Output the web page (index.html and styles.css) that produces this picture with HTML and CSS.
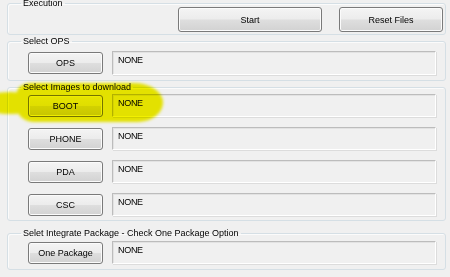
FILE: index.html
```html
<!DOCTYPE html>
<html>
<head>
<meta charset="utf-8">
<link rel="stylesheet" href="styles.css">
</head>
<body>
<div class="dialog">
  <fieldset class="group exec">
    <legend>Execution</legend>
    <div class="exec-row">
      <button class="btn start">Start</button>
      <button class="btn reset">Reset Files</button>
    </div>
  </fieldset>
  <fieldset class="group ops">
    <legend>Select OPS</legend>
    <div class="row"><button class="btn pick">OPS</button><div class="field">NONE</div></div>
  </fieldset>
  <fieldset class="group images">
    <legend>Select Images to download</legend>
    <div class="rows">
      <div class="row"><button class="btn pick">BOOT</button><div class="field">NONE</div></div>
      <div class="row"><button class="btn pick">PHONE</button><div class="field">NONE</div></div>
      <div class="row"><button class="btn pick">PDA</button><div class="field">NONE</div></div>
      <div class="row"><button class="btn pick">CSC</button><div class="field">NONE</div></div>
    </div>
  </fieldset>
  <fieldset class="group integrate">
    <legend>Selet Integrate Package - Check One Package Option</legend>
    <div class="row"><button class="btn pick">One Package</button><div class="field">NONE</div></div>
  </fieldset>
</div>
<div class="marker"><span class="blob main"></span><span class="blob tail"></span></div>
</body>
</html>
```

FILE: styles.css
```css
html, body {
  margin: 0;
  padding: 0;
  background: #f0f0f0;
}
body {
  width: 450px;
  height: 277px;
  overflow: hidden;
  position: relative;
}
.dialog {
  padding: 0 4px 0 7px;
  font-family: "Liberation Sans", Arial, sans-serif;
  font-size: 9px;
  color: #000;
}
.group {
  margin: 0;
  min-inline-size: 0;
  border: 1px solid #d5dfe5;
  border-radius: 3px;
  box-shadow: inset 1px 1px 0 #fbfbfb;
  padding: 0 9px 0 20px;
}
.group legend {
  padding: 0 2px;
  margin-left: -7px;
  line-height: 13px;
  height: 13px;
}
.exec {
  margin-top: -3px;
  padding: 0 0 2px 0;
}
.exec legend {
  margin-left: 13px;
}
.exec-row {
  display: flex;
  justify-content: flex-end;
  gap: 17px;
  margin-top: -3px;
  padding-right: 2px;
}
.ops {
  padding-top: 3px;
  padding-bottom: 5px;
}
.images {
  padding-top: 0;
  padding-bottom: 4px;
}
.integrate {
  margin-top: 6px;
  padding-top: 1px;
  padding-bottom: 5px;
}
.rows {
  display: flex;
  flex-direction: column;
  gap: 10px;
}
.row {
  display: flex;
  align-items: center;
  gap: 9px;
}
.btn {
  font: inherit;
  color: #000;
  margin: 0;
  padding: 0;
  border: 1px solid #7a7a7a;
  border-radius: 3px;
  background: linear-gradient(#f4f4f4 0%, #ececec 48%, #dedede 52%, #d2d2d2 100%);
  box-shadow: inset 0 0 0 1px #fbfbfb;
  text-align: center;
}
.start {
  width: 144px;
  height: 25px;
}
.reset {
  width: 104px;
  height: 25px;
}
.pick {
  width: 75px;
  height: 22px;
  flex: none;
}
.field {
  flex: 1;
  height: 24px;
  box-sizing: border-box;
  border: 1px solid;
  border-color: #bcbcbc #ffffff #ffffff #bcbcbc;
  box-shadow: inset 1px 1px 0 #e2e2e2, 1px 1px 0 #dcdcdc;
  padding: 2px 5px;
  line-height: 13px;
  letter-spacing: -0.3px;
}
.images .field,
.integrate .field {
  height: 23px;
}
.marker {
  position: absolute;
  left: 0;
  top: 0;
  width: 450px;
  height: 277px;
  pointer-events: none;
  mix-blend-mode: multiply;
  filter: blur(1.5px);
}
.blob {
  position: absolute;
  background: #f2f000;
}
.main {
  left: 17px;
  top: 83px;
  width: 146px;
  height: 39px;
  border-radius: 14px 30px 26px 18px / 10px 20px 20px 14px;
}
.tail {
  left: -20px;
  top: 92px;
  width: 60px;
  height: 22px;
  border-radius: 50%;
}
```
